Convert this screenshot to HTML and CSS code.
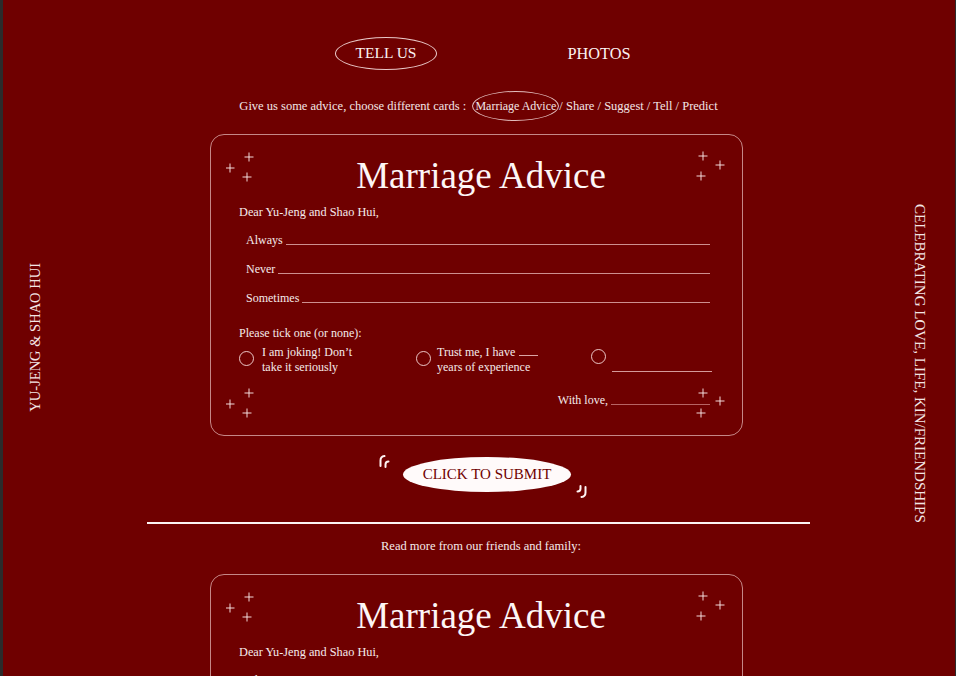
FILE: index.html
```html
<!DOCTYPE html>
<html lang="en">
<head>
<meta charset="utf-8">
<title>Yu-Jeng &amp; Shao Hui — Tell Us</title>
<link rel="stylesheet" href="styles.css">
</head>
<body>
<div class="page">
  <aside class="side side--left"><span class="side-text side-text--up">YU-JENG &amp; SHAO HUI</span></aside>

  <main class="main">
    <nav class="nav">
      <a class="nav-item nav-item--active">TELL US</a>
      <a class="nav-item nav-item--photos">PHOTOS</a>
    </nav>

    <p class="choose">Give us some advice, choose different cards : &nbsp;<span class="pill">Marriage Advice</span>/ Share / Suggest / Tell / Predict</p>

    <section class="card">
      <svg class="spark spark--tl" width="28" height="30" viewBox="0 0 28 30"><path d="M18.5 5H27.5M23 0.5V9.5M-0.5 16H8.5M4 11.5V20.5M16.5 25H25.5M21 20.5V29.5"/></svg>
      <svg class="spark spark--tr" width="30" height="30" viewBox="0 0 30 30"><path d="M2.5 5H11.5M7 0.5V9.5M19.5 14H28.5M24 9.5V18.5M0.5 25H9.5M5 20.5V29.5"/></svg>
      <svg class="spark spark--bl" width="28" height="30" viewBox="0 0 28 30"><path d="M18.5 5H27.5M23 0.5V9.5M-0.5 16H8.5M4 11.5V20.5M16.5 25H25.5M21 20.5V29.5"/></svg>
      <svg class="spark spark--br" width="30" height="30" viewBox="0 0 30 30"><path d="M2.5 5H11.5M7 0.5V9.5M19.5 13H28.5M24 8.5V17.5M0.5 25H9.5M5 20.5V29.5"/></svg>

      <h1 class="card-title">Marriage Advice</h1>
      <p class="dear">Dear Yu-Jeng and Shao Hui,</p>
      <div class="fields">
        <div class="field"><span>Always</span><span class="rule"></span></div>
        <div class="field"><span>Never</span><span class="rule"></span></div>
        <div class="field"><span>Sometimes</span><span class="rule"></span></div>
      </div>
      <p class="tick">Please tick one (or none):</p>
      <div class="options">
        <label class="option"><span class="radio"></span><span class="option-text">I am joking! Don’t<br>take it seriously</span></label>
        <label class="option option--b"><span class="radio"></span><span class="option-text">Trust me, I have <span class="blank-short"></span><br>years of experience</span></label>
        <label class="option option--c"><span class="radio radio--high"></span><span class="blank-long"></span></label>
      </div>
      <div class="sign"><span>With love,</span><span class="sign-rule"></span></div>
    </section>

    <div class="submit-row">
      <div class="submit-wrap">
        <svg class="quote quote--tl" width="14" height="16" viewBox="0 0 14 16"><path d="M2.5 12V6.5Q2.5 2.5 6.5 2M7.5 13V10.5Q7.5 7.5 10.5 7.5"/></svg>
        <button class="submit">CLICK TO SUBMIT</button>
        <svg class="quote quote--br" width="14" height="16" viewBox="0 0 14 16"><path d="M2.5 12V6.5Q2.5 2.5 6.5 2M7.5 13V10.5Q7.5 7.5 10.5 7.5"/></svg>
      </div>
    </div>

    <hr class="divider">

    <p class="read-more">Read more from our friends and family:</p>

    <section class="card">
      <svg class="spark spark--tl" width="28" height="30" viewBox="0 0 28 30"><path d="M18.5 5H27.5M23 0.5V9.5M-0.5 16H8.5M4 11.5V20.5M16.5 25H25.5M21 20.5V29.5"/></svg>
      <svg class="spark spark--tr" width="30" height="30" viewBox="0 0 30 30"><path d="M2.5 5H11.5M7 0.5V9.5M19.5 14H28.5M24 9.5V18.5M0.5 25H9.5M5 20.5V29.5"/></svg>
      <svg class="spark spark--bl" width="28" height="30" viewBox="0 0 28 30"><path d="M18.5 5H27.5M23 0.5V9.5M-0.5 16H8.5M4 11.5V20.5M16.5 25H25.5M21 20.5V29.5"/></svg>
      <svg class="spark spark--br" width="30" height="30" viewBox="0 0 30 30"><path d="M2.5 5H11.5M7 0.5V9.5M19.5 13H28.5M24 8.5V17.5M0.5 25H9.5M5 20.5V29.5"/></svg>

      <h2 class="card-title">Marriage Advice</h2>
      <p class="dear">Dear Yu-Jeng and Shao Hui,</p>
      <div class="fields">
        <div class="field"><span>Always</span><span class="rule"></span></div>
        <div class="field"><span>Never</span><span class="rule"></span></div>
        <div class="field"><span>Sometimes</span><span class="rule"></span></div>
      </div>
      <p class="tick">Please tick one (or none):</p>
      <div class="options">
        <label class="option"><span class="radio"></span><span class="option-text">I am joking! Don’t<br>take it seriously</span></label>
        <label class="option option--b"><span class="radio"></span><span class="option-text">Trust me, I have <span class="blank-short"></span><br>years of experience</span></label>
        <label class="option option--c"><span class="radio radio--high"></span><span class="blank-long"></span></label>
      </div>
      <div class="sign"><span>With love,</span><span class="sign-rule"></span></div>
    </section>
  </main>

  <aside class="side side--right"><span class="side-text side-text--down">CELEBRATING LOVE, LIFE, KIN/FRIENDSHIPS</span></aside>
</div>
</body>
</html>
```

FILE: styles.css
```css
* { box-sizing: border-box; }

html, body {
  margin: 0;
  padding: 0;
}

body {
  background: #2b2b2b;
  font-family: "Liberation Serif", "Times New Roman", serif;
  color: #f5ebeb;
}

.page {
  margin: 0 1px 0 3px;
  min-height: 100vh;
  background: #6f0000;
  display: grid;
  grid-template-columns: 144px 663px 1fr;
  align-items: start;
}

/* side texts */
.side {
  display: flex;
}
.side--left {
  padding: 263px 0 0 24px;
}
.side--right {
  padding: 204px 0 0 102px;
}
.side-text {
  writing-mode: vertical-rl;
  line-height: 16px;
  white-space: nowrap;
  color: #f3e6e6;
}
.side-text--up {
  font-size: 14.5px;
  transform: rotate(180deg);
}
.side-text--down {
  font-size: 15px;
}

/* main column */
.main {
  padding-top: 37px;
  padding-bottom: 40px;
}

.nav {
  display: flex;
  gap: 111px;
  padding-left: 188px;
}
.nav-item {
  width: 102px;
  height: 33px;
  line-height: 31px;
  text-align: center;
  font-size: 15.5px;
  color: #fbf3f3;
  text-decoration: none;
  border: 1px solid transparent;
  border-radius: 50%;
}
.nav-item--active {
  border-color: rgba(255, 235, 235, 0.85);
  line-height: 30px;
}
.nav-item--photos {
  font-size: 16.3px;
}

.choose {
  margin: 21px 0 0;
  text-align: center;
  font-size: 12.5px;
  line-height: 30px;
  color: #f3e6e6;
}
.pill {
  display: inline-block;
  font-size: 12px;
  line-height: 28px;
  padding: 0 2px;
  border: 1px solid rgba(255, 235, 235, 0.8);
  border-radius: 50%;
  vertical-align: top;
}

/* card */
.card {
  position: relative;
  width: 533px;
  margin: 13px 0 0 63px;
  padding: 21px 32px 27px 28px;
  border: 1px solid rgba(255, 225, 225, 0.6);
  border-radius: 14px;
  font-size: 12px;
  line-height: 15px;
}

.spark {
  position: absolute;
  fill: none;
  stroke: rgba(255, 240, 240, 0.9);
  stroke-width: 1;
}
.spark--tl { left: 15px; top: 17px; }
.spark--tr { right: 16px; top: 16px; }
.spark--bl { left: 15px; bottom: 17px; }
.spark--br { right: 16px; bottom: 17px; }

.card-title {
  margin: 0;
  padding-left: 13px;
  text-align: center;
  font-size: 37px;
  line-height: 40px;
  font-weight: normal;
  color: #fdf6f6;
}

.dear {
  margin: 9px 0 0;
  font-size: 12.3px;
}

.fields {
  margin-top: 13px;
  display: flex;
  flex-direction: column;
  gap: 14px;
  padding-left: 7px;
}
.field {
  display: flex;
  align-items: flex-end;
  gap: 3px;
}
.rule {
  flex: 1;
  margin-bottom: 3px;
  border-bottom: 1px solid rgba(255, 220, 220, 0.65);
}

.tick {
  margin: 20px 0 0;
}

.options {
  margin-top: 4px;
  display: grid;
  grid-template-columns: 177px 175px 1fr;
}
.option {
  display: flex;
  align-items: flex-start;
  gap: 8px;
}
.option--b { gap: 6px; }
.option--c { gap: 6px; }
.radio {
  flex: none;
  width: 15px;
  height: 15px;
  margin-top: 6px;
  border: 1px solid rgba(255, 230, 230, 0.85);
  border-radius: 50%;
}
.radio--high {
  margin-top: 4px;
}
.blank-short {
  display: inline-block;
  width: 19px;
  margin-left: 1px;
  border-bottom: 1px solid rgba(255, 220, 220, 0.75);
  vertical-align: baseline;
}
.blank-long {
  width: 100px;
  height: 27px;
  border-bottom: 1px solid rgba(255, 220, 220, 0.7);
}

.sign {
  margin-top: 18px;
  display: flex;
  justify-content: flex-end;
  align-items: flex-end;
  gap: 3px;
}
.sign-rule {
  width: 99px;
  margin-bottom: 3px;
  border-bottom: 1px solid rgba(255, 200, 200, 0.5);
}

/* submit */
.submit-row {
  margin-top: 21px;
  padding-left: 256px;
  display: flex;
}
.submit-wrap {
  position: relative;
}
.submit {
  display: block;
  width: 168px;
  height: 35px;
  padding: 0;
  border: none;
  border-radius: 50%;
  background: #fffafa;
  color: #6f0000;
  font-family: "Liberation Serif", "Times New Roman", serif;
  font-size: 15px;
  letter-spacing: 0;
}
.quote {
  position: absolute;
  fill: none;
  stroke: #fff4f4;
  stroke-width: 2;
  stroke-linecap: round;
}
.quote--tl { left: -25px; top: -3px; }
.quote--br { left: 171px; top: 26px; transform: rotate(180deg); }

.divider {
  margin: 30px 0 0;
  height: 0;
  border: none;
  border-top: 2px solid #fbf2f2;
}

.read-more {
  margin: 15px 0 0;
  padding-left: 5px;
  text-align: center;
  font-size: 12.5px;
  line-height: 15px;
}

.read-more + .card {
  margin-top: 20px;
}
```
